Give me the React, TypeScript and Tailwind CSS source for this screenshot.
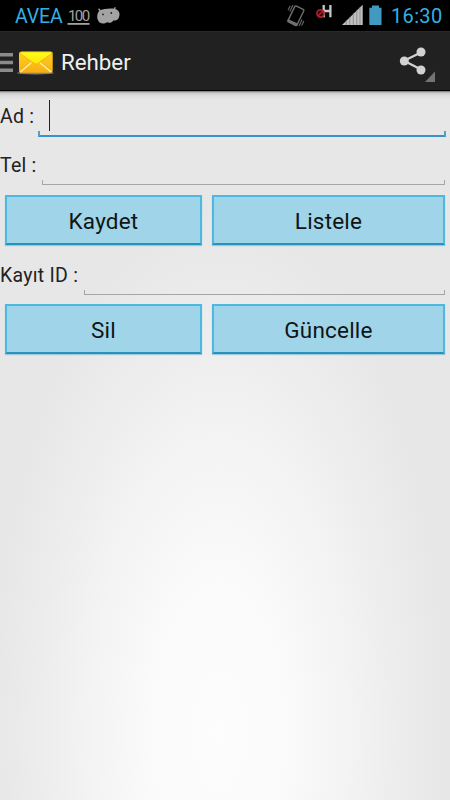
import React from "react";

function CarrierIcons() {
  return (
    <svg width="60" height="31" viewBox="0 0 60 31" className="shrink-0">
      <rect x="2.5" y="23" width="22" height="1.8" fill="#a3a3a3" />
      <path d="M34.5 10.5C38 8.8 46 8 50.5 9C54.5 10.5 55.3 14 54 17.2C53 20.2 50 20.7 48.3 20.5C47.5 22.8 43.5 23.3 42 22.3C39.5 24.2 34.5 24.2 33.3 20.8C31.3 17.8 32.2 13 34.5 10.5z" fill="#a3a3a3" />
      <path d="M36.5 12l-3-3.3M49 10.5l1.2-3.2" stroke="#a3a3a3" strokeWidth="1.3" />
      <circle cx="38" cy="14.4" r=".9" fill="#222" />
      <circle cx="46.3" cy="13" r=".9" fill="#222" />
    </svg>
  );
}

function VibrateIcon() {
  return (
    <svg width="20" height="31" viewBox="0 0 20 31" className="shrink-0">
      <g transform="rotate(26 10 15.5)">
        <rect x="5" y="6.8" width="10" height="17.6" rx="1.3" fill="none" stroke="#6f6f6f" strokeWidth="1.4" />
        <path d="M4.4 22h11.2v2q0 1.2-1.2 1.2H5.6q-1.2 0-1.2-1.2z" fill="#6f6f6f" />
        <path d="M2.7 7.5v7M.5 9.2v5M17.3 16.5v7M19.5 17v5" stroke="#696969" strokeWidth="1.1" />
      </g>
    </svg>
  );
}

function NetworkIcon() {
  return (
    <svg width="18" height="31" viewBox="0 0 18 31" className="shrink-0">
      <path d="M7.7 5v12.3M14.4 5v12.3M8 11h7" stroke="#c7c7c7" strokeWidth="2.3" fill="none" />
      <circle cx="4.5" cy="13.5" r="3.6" fill="#170505" fillOpacity=".75" stroke="#b61c28" strokeWidth="1.7" />
      <path d="M2.1 15.9l4.8-4.8" stroke="#b61c28" strokeWidth="1.5" />
    </svg>
  );
}

function SignalIcon() {
  return (
    <svg width="21" height="31" viewBox="0 0 21 31" className="shrink-0">
      <path d="M0 25L20.7 4.8V25z" fill="#c1c1c1" />
      <path d="M4.3 20v5M7.8 17v8M11.3 13v12M14.8 10v15M18 7v18" stroke="#7b7b7b" strokeWidth=".7" />
    </svg>
  );
}

function BatteryIcon() {
  return (
    <svg width="13" height="31" viewBox="0 0 13 31" className="shrink-0">
      <path d="M3 5.5h7v2.2h2.5V25H.3V7.7H3z" fill="#429ac0" />
    </svg>
  );
}

function StatusBar() {
  return (
    <div className="flex h-[31px] bg-black text-[#35afe0]">
      <span className="ml-[15px] w-[50px] whitespace-nowrap text-[19.5px] leading-[33px] tracking-[-0.1px]">AVEA</span>
      <div className="relative h-[31px] w-[60px]">
        <CarrierIcons />
        <span className="absolute left-[3px] top-0 text-[15px] leading-[32px] tracking-[-1.6px] text-[#a3a3a3]">100</span>
      </div>
      <div className="ml-[161px] flex">
        <VibrateIcon />
        <div className="ml-[10px]"><NetworkIcon /></div>
        <div className="ml-[8px]"><SignalIcon /></div>
        <div className="ml-[6px]"><BatteryIcon /></div>
      </div>
      <span className="ml-[9px] whitespace-nowrap text-[20px] leading-[33px] tracking-[0.35px]">16:30</span>
    </div>
  );
}

function MailIcon() {
  return (
    <svg width="38" height="28" viewBox="0 0 38 28" className="shrink-0">
      <defs>
        <linearGradient id="paper" x2="0" y2="1">
          <stop stopColor="#ffd21c" />
          <stop offset="1" stopColor="#f9ae12" />
        </linearGradient>
        <linearGradient id="flap" x2="0" y2="1">
          <stop stopColor="#fffb21" />
          <stop offset="1" stopColor="#ffe600" />
        </linearGradient>
      </defs>
      <ellipse cx="18.5" cy="23" rx="18.5" ry="1.5" fill="#aaa" opacity=".7" />
      <rect x="2" y="2" width="33.7" height="20.8" rx="2" fill="url(#paper)" />
      <path d="M3 22.3L14.5 12.5M34.5 22.3L22.5 12.5" stroke="#fff3ba" strokeWidth="1.2" />
      <path d="M2.5 3q1-1.2 2.5-1.2h28q1.5 0 2.5 1.2L20.8 13.6q-1.8 1.3-3.6 0z" fill="url(#flap)" stroke="#e4a716" strokeWidth=".7" />
    </svg>
  );
}

function ActionBar() {
  return (
    <header className="flex h-[60px] border-b border-t border-b-black border-t-[#292929] bg-[#212121]">
      <svg width="14" height="58" viewBox="0 0 14 58" className="shrink-0">
        <path d="M0 22.7h13M0 30.5h13M0 38.3h13" stroke="#8b8b8e" strokeWidth="3.4" />
      </svg>
      <div className="ml-[3px] pt-[18px]"><MailIcon /></div>
      <h1 className="ml-[6px] whitespace-nowrap text-[22.3px] font-normal leading-[61px] text-[#f0f0f0]">Rehber</h1>
      <button className="ml-auto mr-[15px]" aria-label="Share">
        <svg width="38" height="58" viewBox="0 0 38 58">
          <path d="M25 20L7 28.8L25 38" stroke="#d2d2d2" strokeWidth="2.3" fill="none" />
          <g fill="#d2d2d2">
            <circle cx="7.3" cy="29" r="4.5" />
            <circle cx="24" cy="20" r="4.5" />
            <circle cx="24" cy="38" r="4.5" />
          </g>
          <path d="M38 39.5V50H28z" fill="#737373" />
        </svg>
      </button>
    </header>
  );
}

function Field({ label, focused = false, gap }: { label: string; focused?: boolean; gap: string }) {
  return (
    <div className="flex h-[49px]">
      <label className={`shrink-0 whitespace-nowrap text-[19.5px] leading-[52px] tracking-[0.25px] text-[#222] ${gap}`}>{label}</label>
      {focused ? (
        <div className="mr-[4px] flex flex-1 flex-col">
          <div className="ml-[11px] mt-[9px] h-[31px] w-px bg-[#222]" />
          <div className="h-[6px] border-x-2 border-b-2 border-[#4ba3d0] border-b-[#3594c9]" />
        </div>
      ) : (
        <div className="mr-[5px] mt-[40px] h-[5px] flex-1 border-x border-b border-[#a6a6a6]" />
      )}
    </div>
  );
}

function ActionButton({ children, width }: { children: React.ReactNode; width: string }) {
  return (
    <button className={`h-[50px] border-2 border-[#4db9e1] border-b-[#2892bd] bg-[#9fd4e9] text-[22.5px] leading-[48px] tracking-[0.2px] text-[#101415] shadow-[0_1px_1px_rgba(70,160,195,0.45)] ${width}`}>
      {children}
    </button>
  );
}

function ButtonRow({ left, right }: { left: string; right: string }) {
  return (
    <div className="flex h-[60px] gap-[10px] pl-[5px] pt-[5px]">
      <ActionButton width="w-[197px]">{left}</ActionButton>
      <ActionButton width="w-[233px]">{right}</ActionButton>
    </div>
  );
}

export default function App() {
  return (
    <div className="flex h-[800px] w-[450px] flex-col overflow-hidden font-['Roboto',sans-serif]">
      <StatusBar />
      <ActionBar />
      <main className="flex-1 bg-[linear-gradient(to_bottom,rgba(0,0,0,0.5)_0px,rgba(0,0,0,0.12)_2px,rgba(0,0,0,0.04)_5px,transparent_9px),radial-gradient(ellipse_230px_520px_at_219px_640px,#fdfdfd_0%,#fafafa_30%,#f4f4f4_54%,#ececec_80%,#e7e7e7_100%)]">
        <Field label="Ad :" focused gap="w-[38px]" />
        <Field label="Tel :" gap="w-[42px]" />
        <div className="h-[1px]" />
        <ButtonRow left="Kaydet" right="Listele" />
        <Field label="Kayıt ID :" gap="w-[84px]" />
        <ButtonRow left="Sil" right="Güncelle" />
      </main>
    </div>
  );
}
